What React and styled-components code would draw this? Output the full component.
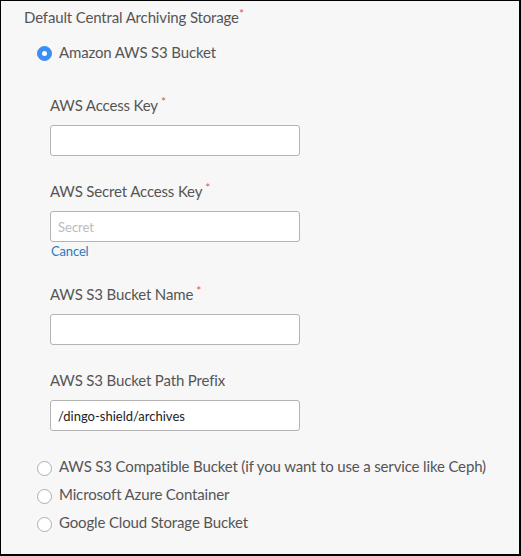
import React from "react";
import styled, { createGlobalStyle } from "styled-components";

const text = "#555";
const red = "#e8554e";
const blue = "#3b8ef3";

const Global = createGlobalStyle`
  html, body { margin: 0; padding: 0; }
  body {
    background: #f7f7f7;
    font-family: Lato, "Open Sans", sans-serif;
  }
`;

const Frame = styled.div`
  box-sizing: border-box;
  width: 521px;
  height: 556px;
  background: #f7f7f7;
  border-top: 1px solid #000;
  border-left: 1px solid #000;
  border-right: 2px solid #000;
  border-bottom: 2px solid #000;
  padding: 6px 0 0 23px;
  color: ${text};
  font-size: 15px;
  letter-spacing: -0.15px;
`;

const Title = styled.div`
  line-height: 20px;
  margin-bottom: 15px;
`;

const Req = styled.span`
  color: ${red};
  font-size: 12px;
  vertical-align: top;
  line-height: 14px;
  margin-left: ${p => (p.$gap ? "3px" : "0")};
`;

const Options = styled.div`
  padding-left: 13px;
`;

const Option = styled.label`
  display: flex;
  align-items: center;
  gap: 7px;
  height: ${p => (p.$tall ? "20px" : "28px")};
  line-height: 20px;
  white-space: nowrap;
`;

const Radio = styled.span`
  box-sizing: border-box;
  flex: none;
  width: 15px;
  height: 15px;
  border-radius: 50%;
  margin-top: ${p => (p.$checked ? "3px" : "5px")};
  background: ${p => (p.$checked ? blue : "#fff")};
  border: 1px solid ${p => (p.$checked ? blue : "#adadad")};
  display: flex;
  align-items: center;
  justify-content: center;
  &::after {
    content: "";
    display: ${p => (p.$checked ? "block" : "none")};
    width: 5px;
    height: 5px;
    border-radius: 50%;
    background: #fff;
  }
`;

const Fields = styled.div`
  padding: 33px 0 21px 26px;
`;

const Field = styled.div`
  margin-bottom: ${p => (p.$last ? "0" : "25px")};
`;

const Label = styled.div`
  line-height: 20px;
  margin-bottom: 10px;
`;

const Input = styled.input`
  box-sizing: border-box;
  display: block;
  width: 250px;
  height: 31px;
  margin: 0;
  padding: 0 7px;
  border: 1px solid #b3b3b3;
  border-radius: 3px;
  background: #fff;
  font-family: Lato, "Open Sans", sans-serif;
  font-size: 13px;
  color: #222;
  outline: none;
  &::placeholder {
    color: #bbb;
  }
`;

const Link = styled.a`
  display: block;
  font-size: 13px;
  line-height: 16px;
  color: #2a7bbd;
  margin: 1px 0 0 1px;
  cursor: pointer;
`;

export default function App() {
  return (
    <>
      <Global />
      <Frame>
        <Title>
          Default Central Archiving Storage<Req>*</Req>
        </Title>
        <Options>
          <Option $tall>
            <Radio $checked />
            Amazon AWS S3 Bucket
          </Option>
        </Options>
        <Fields>
          <Field>
            <Label>
              AWS Access Key<Req $gap>*</Req>
            </Label>
            <Input />
          </Field>
          <Field>
            <Label>
              AWS Secret Access Key<Req $gap>*</Req>
            </Label>
            <Input placeholder="Secret" />
            <Link>Cancel</Link>
          </Field>
          <Field>
            <Label>
              AWS S3 Bucket Name<Req $gap>*</Req>
            </Label>
            <Input />
          </Field>
          <Field $last>
            <Label>AWS S3 Bucket Path Prefix</Label>
            <Input defaultValue="/dingo-shield/archives" />
          </Field>
        </Fields>
        <Options>
          <Option>
            <Radio />
            AWS S3 Compatible Bucket (if you want to use a service like Ceph)
          </Option>
          <Option>
            <Radio />
            Microsoft Azure Container
          </Option>
          <Option>
            <Radio />
            Google Cloud Storage Bucket
          </Option>
        </Options>
      </Frame>
    </>
  );
}
